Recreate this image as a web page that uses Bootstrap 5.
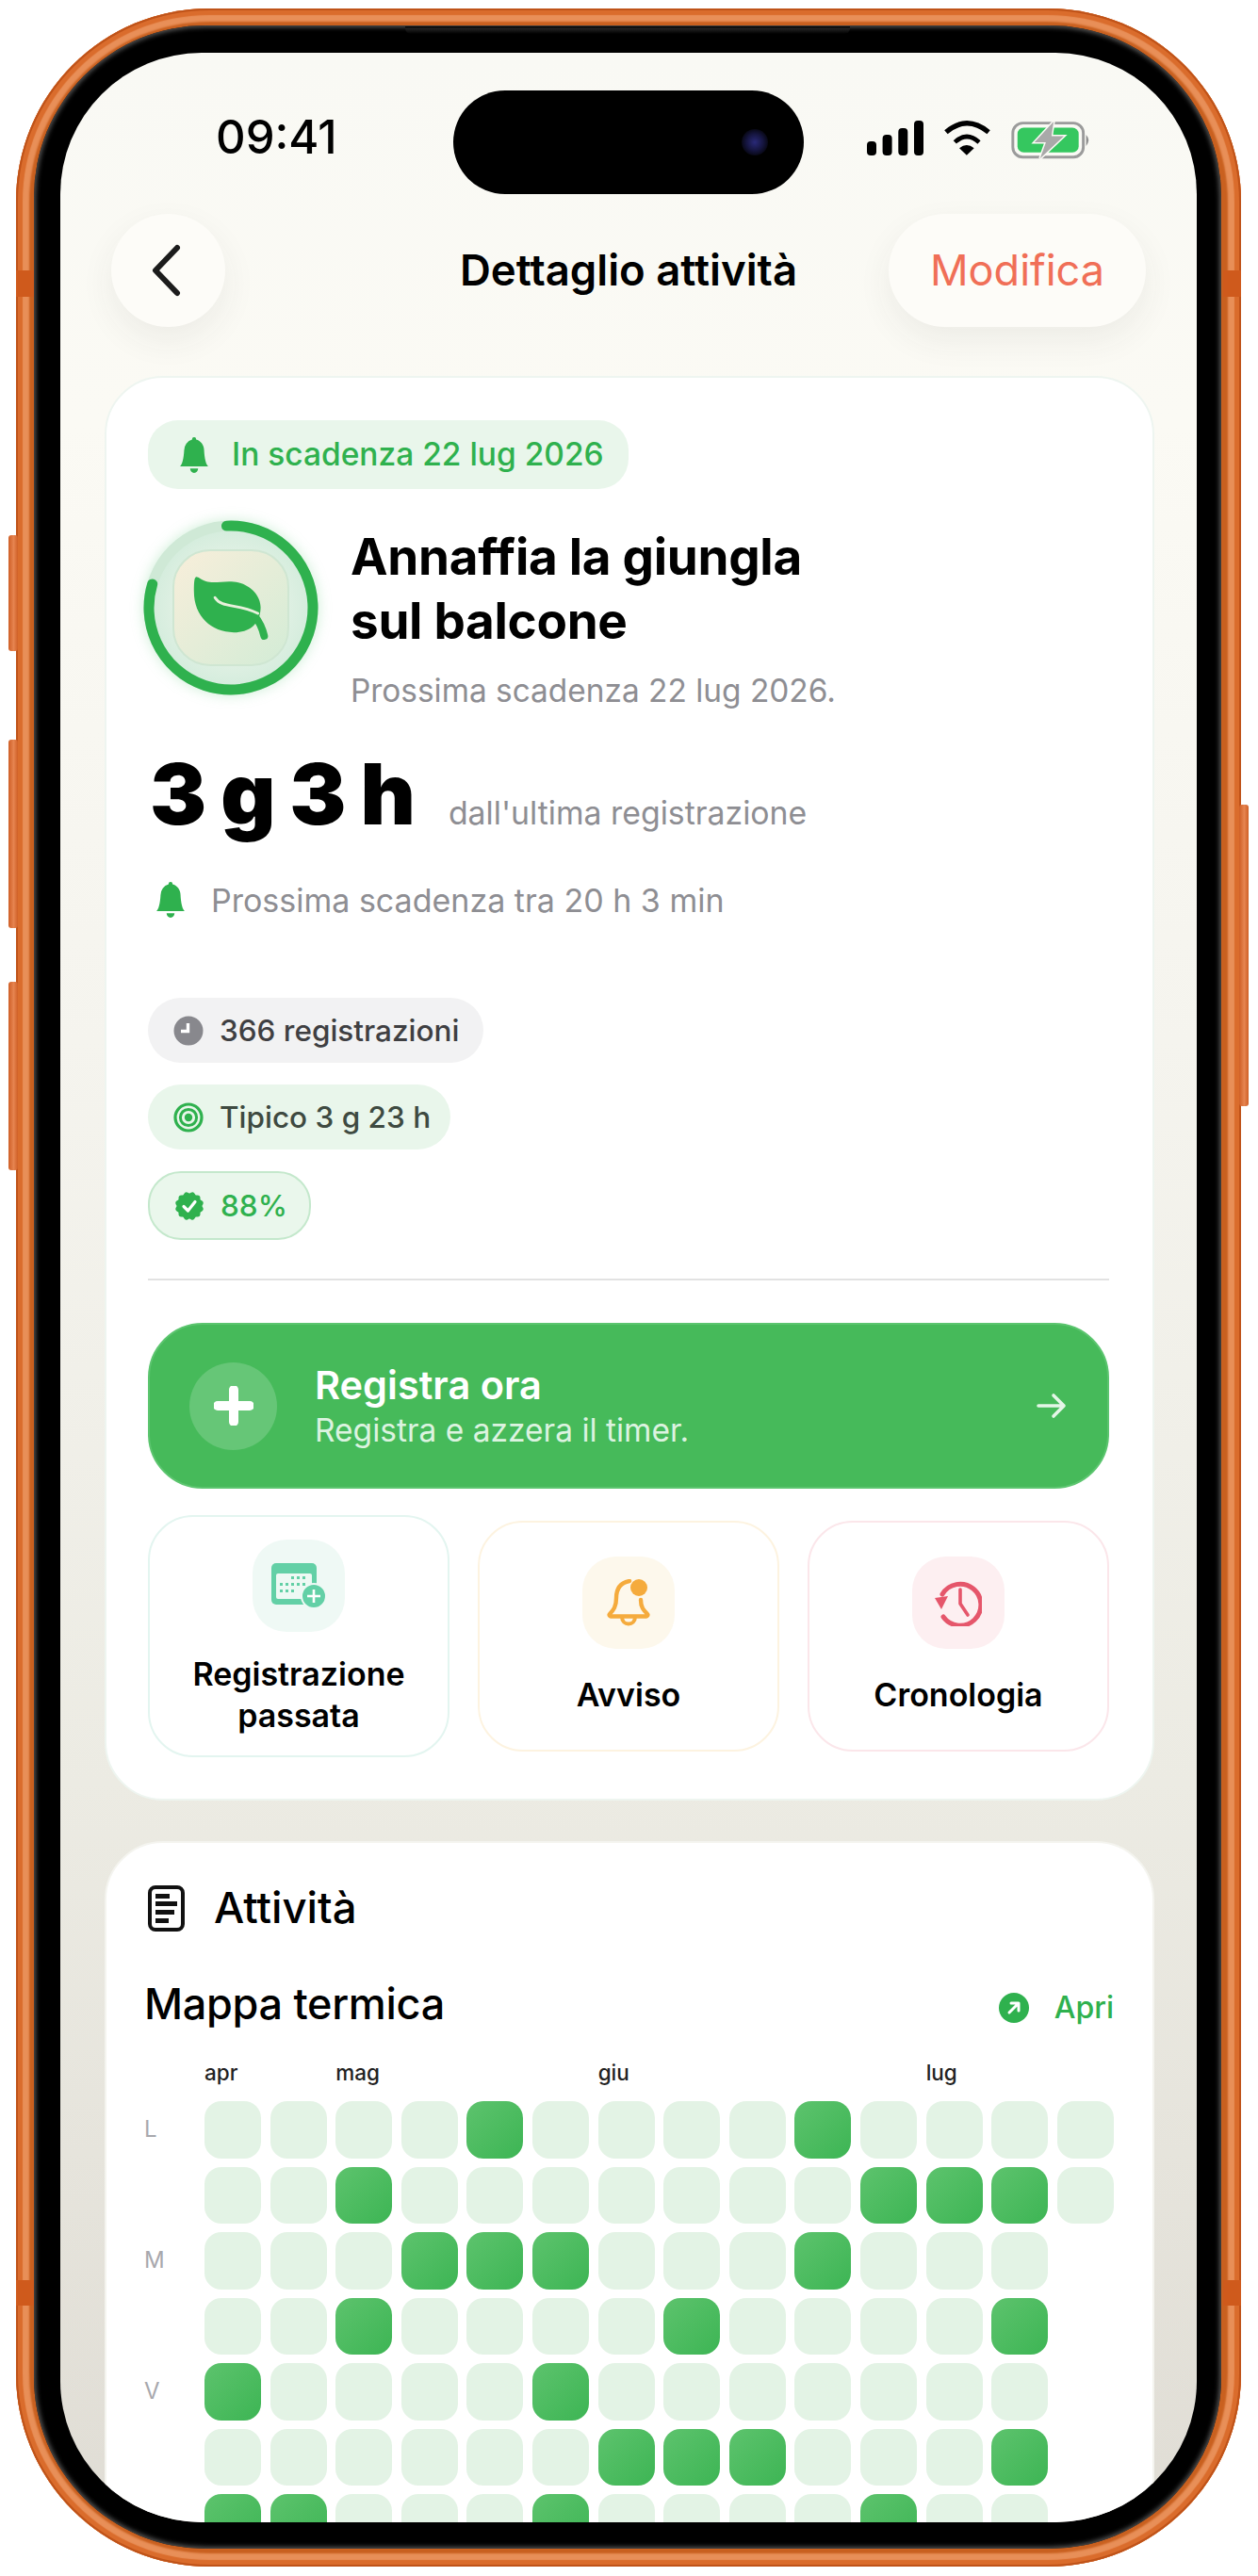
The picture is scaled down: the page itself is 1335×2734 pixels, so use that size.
<!DOCTYPE html>
<html lang="it">
<head>
<meta charset="UTF-8">
<meta name="viewport" content="width=device-width, initial-scale=1.0">
<title>Dettaglio attività</title>
<link href="https://cdn.jsdelivr.net/npm/bootstrap@5.3.3/dist/css/bootstrap.min.css" rel="stylesheet">
<style>
body { background: #fff; font-family: "Inter", "Liberation Sans", sans-serif; }
.phone-wrap { position: relative; width: 1335px; height: 2734px; padding: 9px 18px 10px 17px; }
.side-key { position: absolute; background: linear-gradient(90deg, #cf5f26, #e68450 55%, #cf5f26); border-radius: 3px; }
.key-a { left: 9px; top: 568px; width: 10px; height: 123px; }
.key-b { left: 9px; top: 785px; width: 10px; height: 200px; }
.key-c { left: 9px; top: 1042px; width: 10px; height: 200px; }
.key-d { left: 1315px; top: 854px; width: 10px; height: 320px; }
.band-mark { position: absolute; width: 19px; background: #cf5a1c; }
.band-l { left: 17px; }
.band-r { left: 1298px; }
.band-top { top: 287px; height: 28px; }
.band-low { top: 2420px; height: 27px; }
.bezel-lip { position: absolute; left: 430px; top: 28px; width: 472px; height: 8px; background: linear-gradient(180deg, #000, #222 30%, #000); border-radius: 0 0 6px 6px; }
.phone-shell { height: 2715px; padding: 18px 21px 19px 19px; border-radius: 205px;
  background: #c9601f;
  box-shadow: inset 0 0 0 2px #bf5319, inset 0 0 1px 7px #da6c2c, inset 0 0 2px 14px #e88f58; }
.phone-bezel { height: 100%; padding: 29px 26px 28px 28px; background: #000; border-radius: 182px;
  box-shadow: inset 0 0 5px 2px #555; }
.phone-screen { position: relative; height: 100%; overflow: hidden; border-radius: 150px;
  background: linear-gradient(180deg, #f9f9f4 0%, #fbfaf4 15%, #f5f4ee 40%, #ecebe3 70%, #e0ddd5 100%); }
.island { position: absolute; left: 417px; top: 40px; width: 372px; height: 110px; border-radius: 55px; background: #000; }
.lens { position: absolute; left: 306px; top: 41px; width: 28px; height: 28px; border-radius: 50%;
  background: radial-gradient(circle, #2a2a78 0%, #15153f 45%, #06060f 75%); }
.status-row { height: 171px; padding: 72px 112px 0 165px; }
.status-time { font-size: 49px; line-height: 36px; font-weight: 500; color: #000; letter-spacing: 0; }
.status-icons { gap: 20px; }
.top-row { display: grid; grid-template-columns: 1fr auto 1fr; align-items: center; padding: 0 54px 0 54px; height: 120px; }
.back-btn { width: 121px; height: 120px; border-radius: 50%; background: #fdfcf8; box-shadow: 0 14px 36px rgba(60,60,50,.07); }
.back-btn svg { margin-right: 6px; }
.edit-btn { width: 273px; height: 120px; border-radius: 60px; background: #fdfcf8; color: #f06f57; font-size: 45px; box-shadow: 0 14px 36px rgba(60,60,50,.07); }
.edit-btn:hover { background: #fdfcf8; color: #f06f57; }
.top-title { font-size: 45.5px; font-weight: 600; color: #000; margin: 0; letter-spacing: 0; }
.sheet { background: #fff; margin: 0 45px 0 47px; border: 2px solid #eef5f0; border-radius: 62px; }
.sheet-main { margin-top: 52px; height: 1512px; padding: 45px 46px 0 44px; }
.sheet-log { margin-top: 43px; padding: 45px 41px 0 40px; height: 900px; border-color: #f4f4ef; }
.due-pill { height: 73px; width: 510px; border-radius: 32px; background: #e9f6eb; color: #2fb14e; font-size: 33.5px; font-weight: 500; padding-left: 32px; gap: 23px; }
.hero-row { margin: 33px 0 0 -5px; gap: 34px; }
.hero-ring { width: 186px; height: 186px; flex: none; position: relative; filter: drop-shadow(0 0 7px rgba(90,200,120,.3)); }
.hero-tile { position: absolute; left: 31px; top: 31px; width: 124px; height: 124px; border-radius: 40px;
  background: linear-gradient(135deg, #f8eeda, #d3ecd6); border: 2px solid #cfe6d2; }
.hero-title { font-size: 53px; line-height: 68px; font-weight: 700; color: #000; margin: 5px 0 0; letter-spacing: -.3px; }
.hero-sub { font-size: 33.4px; line-height: 44px; color: #8e8e93; margin: 18px 0 0; }
.count-row { margin: 38px 0 0 2px; height: 104px; }
.count-big { font-size: 90px; line-height: 100px; font-weight: 900; color: #000; word-spacing: -1px; letter-spacing: -1px; }
.count-note { font-size: 33.8px; color: #8e8e93; margin-left: 36px; }
.next-row { margin-top: 36px; height: 44px; gap: 26px; padding-left: 7px; font-size: 34px; color: #8e8e93; }
.stat-stack { margin-top: 82px; gap: 23px; }
.stat-pill { height: 69px; border-radius: 35px; padding: 0 0 0 27px; gap: 17px; font-size: 31.5px; font-weight: 500; color: #3f3f42; white-space: nowrap; }
.stat-grey { background: #f2f2f3; width: 356px; }
.stat-green { background: #e9f6eb; color: #3e4a41; width: 321px; }
.stat-ok { background: #eaf7ec; border: 2px solid #c4e8cc; color: #2fb14e; width: 173px; height: 73px; padding: 0 0 0 25px; gap: 16px; }
.sep-line { height: 2px; background: #e2e2e2; margin-top: 41px; }
.log-btn { margin-top: 45px; width: 1020px; height: 176px; border-radius: 58px; background: #46ba5a; border: 2px solid #5cc56f; color: #fff; padding: 0 43px 0 42px; text-align: left; }
.log-btn:hover { background: #46ba5a; color: #fff; border-color: #5cc56f; }
.log-plus { width: 93px; height: 93px; border-radius: 50%; background: #66c677; flex: none; margin-right: 40px; }
.log-head { font-size: 41.5px; line-height: 48px; font-weight: 600; }
.log-sub { font-size: 33.5px; line-height: 40px; color: #dcf3e0; margin-top: 4px; }
.quick-row { margin-top: 28px; gap: 30px; height: 257px; width: 1020px; }
.quick-btn { width: 320px; background: #fff; border-radius: 48px; border: 2px solid; padding: 0; height: 245px; color: #000; font-size: 34px; line-height: 44px; font-weight: 600; }
.quick-tall { height: 257px; }
.quick-mint { border-color: #e3f5f0; }
.quick-sand { border-color: #fdf3e0; }
.quick-rose { border-color: #fbe6ea; }
.quick-tile { width: 98px; height: 98px; border-radius: 36px; margin: 24px 0 23px; }
.quick-tile-low { margin: 36px 0 27px; }
.tile-mint { background: #eff9f5; }
.tile-sand { background: #fdf8ec; }
.tile-rose { background: #fdeff1; }
.log-title { gap: 31px; padding-left: 4px; font-size: 45.5px; font-weight: 500; color: #000; height: 49px; }
.map-head { margin-top: 49px; height: 56px; }
.map-title { font-size: 45px; font-weight: 500; color: #000; margin: 0; letter-spacing: -.3px; }
.map-open { gap: 27px; color: #2fb14e; font-size: 32px; font-weight: 500; padding: 8px 0 0 0; }
.month-row { display: grid; grid-template-columns: 54.5px repeat(14, 60px); column-gap: 9.6px; height: 30px; margin-top: 30px; }
.month-tag { font-size: 22.5px; line-height: 30px; font-weight: 500; color: #222; white-space: nowrap; }
.heat-grid { display: grid; grid-template-columns: 54.5px repeat(14, 60px); grid-auto-rows: 60.5px; column-gap: 9.6px; row-gap: 9px; margin-top: 15px; }
.day-tag { font-size: 24px; color: #a8a8ad; display: flex; align-items: center; }
.day-box { border-radius: 18px; background: #e3f3e5; }
.day-on { background: linear-gradient(135deg, #5dc36d, #3db554); }
</style>
</head>
<body>
<div class="phone-wrap">
  <span class="side-key key-a"></span>
  <span class="side-key key-b"></span>
  <span class="side-key key-c"></span>
  <span class="side-key key-d"></span>
  <div class="phone-shell">
    <div class="phone-bezel">
      <div class="phone-screen">
        <div class="island"><span class="lens"></span></div>

        <div class="status-row d-flex justify-content-between align-items-start">
          <span class="status-time">09:41</span>
          <div class="status-icons d-flex align-items-start">
            <svg width="60" height="37" viewBox="0 0 60 37" fill="#000"><rect x="0" y="22" width="10" height="15" rx="4"/><rect x="16.6" y="15" width="10" height="22" rx="4"/><rect x="33.3" y="8" width="10" height="29" rx="4"/><rect x="50" y="0" width="10" height="37" rx="4"/></svg>
            <svg width="53" height="37" viewBox="240 15 160 118"><path d="M248 54Q318 -6 392 54" fill="none" stroke="#000" stroke-width="17"/><path d="M278 88Q318 50 360 88" fill="none" stroke="#000" stroke-width="15"/><path d="M293 108Q318 88 343 108L318 132Z" fill="#000"/></svg>
            <svg width="85" height="41" viewBox="460 12 258 125"><rect x="465" y="20" width="228" height="110" rx="32" fill="none" stroke="#9b9b9b" stroke-width="9"/><rect x="480" y="35" width="198" height="80" rx="20" fill="#35c75f"/><path d="M702 58Q718 75 702 94Z" fill="#8f8f8f"/><path d="M597 15L535 82H572L553 135L630 62H590Z" fill="#a9a9a9" stroke="#fbfaf5" stroke-width="9" paint-order="stroke"/></svg>
          </div>
        </div>

        <div class="top-row">
          <div><button class="btn back-btn d-flex align-items-center justify-content-center p-0" type="button">
            <svg width="34" height="56" viewBox="0 0 34 56"><path d="M29 4L6 28L29 52" fill="none" stroke="#1c1c1c" stroke-width="6" stroke-linecap="round" stroke-linejoin="round"/></svg>
          </button></div>
          <h1 class="top-title">Dettaglio attività</h1>
          <div class="d-flex justify-content-end"><button class="btn edit-btn p-0" type="button">Modifica</button></div>
        </div>

        <div class="card sheet sheet-main">
          <div class="due-pill d-flex align-items-center">
            <svg width="34" height="38" viewBox="0 0 16 16" fill="#2fb14e" preserveAspectRatio="none"><path d="M8 16a2 2 0 0 0 2-2H6a2 2 0 0 0 2 2zm.995-14.901a1 1 0 1 0-1.99 0A5.002 5.002 0 0 0 3 6c0 1.098-.5 6-2 7h14c-1.5-1-2-5.902-2-7 0-2.42-1.72-4.44-4.005-4.901z"/></svg>
            <span>In scadenza 22 lug 2026</span>
          </div>

          <div class="hero-row d-flex align-items-start">
            <div class="hero-ring">
              <svg width="186" height="186" viewBox="0 0 186 186">
                <defs><radialGradient id="ringFill"><stop offset="55%" stop-color="#e4f2e6"/><stop offset="100%" stop-color="#d3ecdc"/></radialGradient></defs>
                <circle cx="93" cy="93" r="87" fill="url(#ringFill)" stroke="#cfe9d6" stroke-width="11"/>
                <circle cx="93" cy="93" r="87" fill="none" stroke="#2fb14e" stroke-width="11" stroke-linecap="round" pathLength="100" stroke-dasharray="80.5 19.5" transform="rotate(-93 93 93)"/>
              </svg>
              <div class="hero-tile d-flex align-items-center justify-content-center">
                <svg width="86" height="75" viewBox="180 200 270 235">
                  <path d="M200 213C208 213 215 222 232 228C262 238 300 222 340 232C385 243 416 280 414 318C412 372 375 398 325 398C250 398 192 345 192 262C192 240 192 213 200 213Z" fill="#2fb14e"/>
                  <path d="M395 345C412 365 420 385 426 410" fill="none" stroke="#2fb14e" stroke-width="25" stroke-linecap="round"/>
                  <path d="M262 282C285 320 340 300 405 335" fill="none" stroke="#e8f1dc" stroke-width="9" stroke-linecap="round"/>
                </svg>
              </div>
            </div>
            <div>
              <h2 class="hero-title">Annaffia la giungla<br>sul balcone</h2>
              <p class="hero-sub">Prossima scadenza 22 lug 2026.</p>
            </div>
          </div>

          <div class="count-row d-flex align-items-baseline">
            <span class="count-big">3 g 3 h</span>
            <span class="count-note">dall'ultima registrazione</span>
          </div>

          <div class="next-row d-flex align-items-center">
            <svg width="34" height="38" viewBox="0 0 16 16" fill="#2fb14e" preserveAspectRatio="none"><path d="M8 16a2 2 0 0 0 2-2H6a2 2 0 0 0 2 2zm.995-14.901a1 1 0 1 0-1.99 0A5.002 5.002 0 0 0 3 6c0 1.098-.5 6-2 7h14c-1.5-1-2-5.902-2-7 0-2.42-1.72-4.44-4.005-4.901z"/></svg>
            <span>Prossima scadenza tra 20 h 3 min</span>
          </div>

          <div class="stat-stack d-flex flex-column align-items-start">
            <div class="stat-pill stat-grey d-flex align-items-center">
              <svg width="32" height="32" viewBox="0 0 32 32"><circle cx="16" cy="16" r="15.5" fill="#88888d"/><path d="M15.5 8V16.5H8" fill="none" stroke="#fff" stroke-width="3.4"/></svg>
              <span>366 registrazioni</span>
            </div>
            <div class="stat-pill stat-green d-flex align-items-center">
              <svg width="32" height="32" viewBox="0 0 32 32" fill="none" stroke="#2fb14e"><circle cx="16" cy="16" r="14" stroke-width="3.2"/><circle cx="16" cy="16" r="8.6" stroke-width="3"/><circle cx="16" cy="16" r="4.2" fill="#2fb14e" stroke="none"/></svg>
              <span>Tipico 3 g 23 h</span>
            </div>
            <div class="stat-pill stat-ok d-flex align-items-center">
              <svg width="34" height="34" viewBox="0 0 34 34"><rect x="5.500" y="5.500" width="23" height="23" rx="3" fill="#2fb14e"/><rect x="5.500" y="5.500" width="23" height="23" rx="3" fill="#2fb14e" transform="rotate(30 17 17)"/><rect x="5.500" y="5.500" width="23" height="23" rx="3" fill="#2fb14e" transform="rotate(60 17 17)"/><path d="M11 17.500L15.500 22L23 12.500" fill="none" stroke="#fff" stroke-width="3.2" stroke-linecap="round" stroke-linejoin="round"/></svg>
              <span>88%</span>
            </div>
          </div>

          <div class="sep-line"></div>

          <button class="btn log-btn d-flex align-items-center" type="button">
            <span class="log-plus d-flex align-items-center justify-content-center">
              <svg width="42" height="42" viewBox="0 0 42 42"><path d="M21 4V38M4 21H38" stroke="#fff" stroke-width="10" stroke-linecap="round"/></svg>
            </span>
            <span class="flex-grow-1">
              <span class="log-head d-block">Registra ora</span>
              <span class="log-sub d-block">Registra e azzera il timer.</span>
            </span>
            <svg width="32" height="28" viewBox="0 0 32 28"><path d="M2 14H29M18 3L29 14L18 25" fill="none" stroke="#e4f6e7" stroke-width="3.6" stroke-linecap="round" stroke-linejoin="round"/></svg>
          </button>

          <div class="quick-row d-flex align-items-center">
            <button class="btn quick-btn quick-tall quick-mint d-flex flex-column align-items-center" type="button">
              <span class="quick-tile tile-mint d-flex align-items-center justify-content-center">
                <svg width="58" height="48" viewBox="0 0 58 48"><rect x="0" y="0" width="48" height="44" rx="5" fill="#63d0a6"/><rect x="5" y="11" width="38" height="27" rx="2" fill="#eef9f4"/><g fill="#63d0a6"><rect x="21" y="14" width="3" height="3"/><rect x="27" y="14" width="3" height="3"/><rect x="33" y="14" width="3" height="3"/><rect x="9" y="21" width="3" height="3"/><rect x="15" y="21" width="3" height="3"/><rect x="21" y="21" width="3" height="3"/><rect x="27" y="21" width="3" height="3"/><rect x="33" y="21" width="3" height="3"/><rect x="9" y="28" width="3" height="3"/><rect x="15" y="28" width="3" height="3"/><rect x="21" y="28" width="3" height="3"/></g><circle cx="45" cy="35" r="13" fill="#63d0a6" stroke="#eff9f5" stroke-width="2"/><path d="M45 28V42M38 35H52" stroke="#fff" stroke-width="2.6"/></svg>
              </span>
              <span>Registrazione<br>passata</span>
            </button>
            <button class="btn quick-btn quick-sand d-flex flex-column align-items-center" type="button">
              <span class="quick-tile quick-tile-low tile-sand d-flex align-items-center justify-content-center">
                <svg width="46" height="50" viewBox="0 0 46 50"><path d="M24 2C13 4 10 12 10 20C10 29 7 33 3 37C2 38 3 39.500 4 39.500H42C43 39.500 44 38 43 37C39 33 36 30 36 22" fill="none" stroke="#f5ab3d" stroke-width="4.400" stroke-linecap="round" stroke-linejoin="round"/><path d="M16 40C16 50 30 50 30 40" fill="none" stroke="#f5ab3d" stroke-width="4"/><circle cx="34" cy="9" r="9" fill="#f5ab3d"/></svg>
              </span>
              <span>Avviso</span>
            </button>
            <button class="btn quick-btn quick-rose d-flex flex-column align-items-center" type="button">
              <span class="quick-tile quick-tile-low tile-rose d-flex align-items-center justify-content-center">
                <svg width="50" height="50" viewBox="0 0 50 50"><path d="M8 16A22 22 0 1 1 9 40" fill="none" stroke="#e5566b" stroke-width="5" stroke-linecap="round"/><path d="M0 20L14 18L7 32Z" fill="#e5566b"/><path d="M27 11V26L35 38" fill="none" stroke="#e5566b" stroke-width="3.600" stroke-linecap="round" stroke-linejoin="round"/></svg>
              </span>
              <span>Cronologia</span>
            </button>
          </div>
        </div>

        <div class="card sheet sheet-log">
          <div class="log-title d-flex align-items-center">
            <svg width="39" height="49" viewBox="0 0 39 49"><rect x="2" y="2" width="35" height="45" rx="6" fill="none" stroke="#111" stroke-width="4"/><g fill="#111"><rect x="8" y="9" width="15" height="5"/><rect x="8" y="17" width="23" height="5"/><rect x="8" y="26" width="20" height="5"/><rect x="8" y="35" width="14" height="5"/></g></svg>
            <span>Attività</span>
          </div>
          <div class="map-head d-flex align-items-center justify-content-between">
            <h3 class="map-title">Mappa termica</h3>
            <div class="map-open d-flex align-items-center">
              <svg width="32" height="32" viewBox="0 0 32 32"><circle cx="16" cy="16" r="16" fill="#2fb14e"/><path d="M11 21L21 11M13 11H21V19" fill="none" stroke="#fff" stroke-width="3" stroke-linecap="round" stroke-linejoin="round"/></svg>
              <span>Apri</span>
            </div>
          </div>
          <div class="month-row" id="months"></div>
          <div class="heat-grid" id="heat"></div>
        </div>
      </div>
    </div>
  </div>
  <span class="band-mark band-l band-top"></span>
  <span class="band-mark band-r band-top"></span>
  <span class="band-mark band-l band-low"></span>
  <span class="band-mark band-r band-low"></span>
  <span class="bezel-lip"></span>
</div>

<script>
// months sit on the week column they start in
const months = [["apr", 0], ["mag", 2], ["giu", 6], ["lug", 11]];
const monthRow = document.getElementById("months");
months.forEach(m => {
    const tag = document.createElement("span");
    tag.className = "month-tag";
    tag.textContent = m[0];
    tag.style.gridColumn = (m[1] + 2);
    tag.style.gridRow = 1;
    monthRow.appendChild(tag);
});

// weeks with the columns that have a registration
const weeks = [
    { label: "L", cols: 14, on: [4, 9] },
    { label: "",  cols: 14, on: [2, 10, 11, 12] },
    { label: "M", cols: 13, on: [3, 4, 5, 9] },
    { label: "",  cols: 13, on: [2, 7, 12] },
    { label: "V", cols: 13, on: [0, 5] },
    { label: "",  cols: 13, on: [6, 7, 8, 12] },
    { label: "",  cols: 13, on: [0, 1, 5, 10] }
];
const heat = document.getElementById("heat");
weeks.forEach((week, r) => {
    const day = document.createElement("span");
    day.className = "day-tag";
    day.textContent = week.label;
    day.style.gridRow = r + 1;
    day.style.gridColumn = 1;
    heat.appendChild(day);
    for (let c = 0; c < week.cols; c++) {
        const box = document.createElement("span");
        box.className = week.on.includes(c) ? "day-box day-on" : "day-box";
        box.style.gridRow = r + 1;
        box.style.gridColumn = c + 2;
        heat.appendChild(box);
    }
});
</script>
</body>
</html>
